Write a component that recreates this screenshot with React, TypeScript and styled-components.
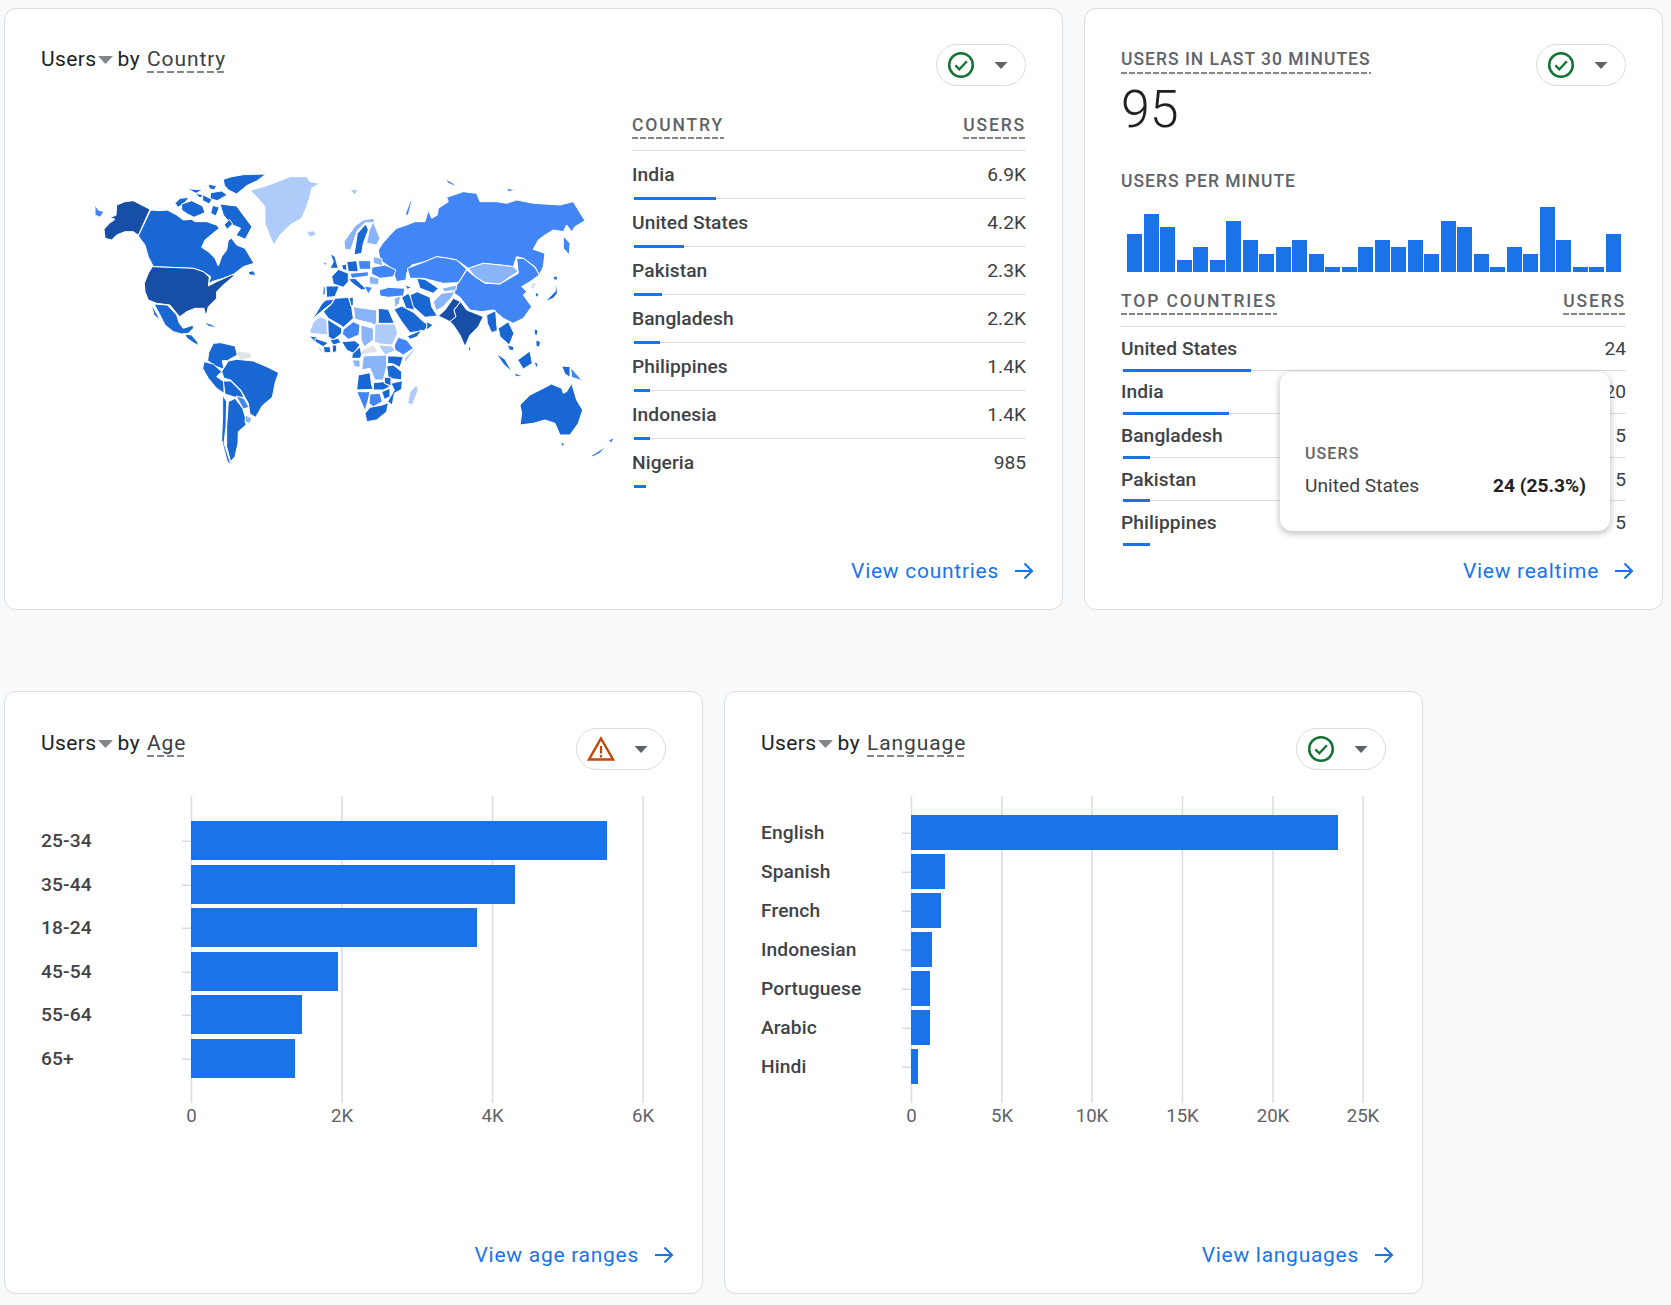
import React from 'react';
import styled, { createGlobalStyle } from 'styled-components';

const DARK = '#174ea6';
const MID = '#1967d2';
const BLUE = '#4285f4';
const SOFT = '#8ab4f8';
const PALE = '#aecbfa';
const GREY = '#e0e2e5';

const GlobalStyle = createGlobalStyle`
  html, body {
    margin: 0;
    background: #f8f9fa;
    font-family: Roboto, "Liberation Sans", sans-serif;
    color: #3c4043;
  }
`;

const Page = styled.div`
  display: flex;
  flex-direction: column;
  gap: 81px;
  padding: 8px 0 11px 4px;
  min-height: 1305px;
  box-sizing: border-box;
`;

const Row = styled.div`
  display: flex;
  gap: 21px;
`;

const Card = styled.section<{ $w: number; $low?: boolean }>`
  position: relative;
  display: flex;
  flex-direction: column;
  box-sizing: border-box;
  width: ${p => p.$w}px;
  height: ${p => (p.$low ? 603 : 602)}px;
  padding: ${p => (p.$low ? 36 : 35)}px 36px 0;
  background: #fff;
  border: 1px solid #dadce0;
  border-radius: 12px;
`;

const CardHeader = styled.div`
  display: flex;
  justify-content: space-between;
  align-items: flex-start;
`;

const Title = styled.div`
  display: flex;
  align-items: center;
  height: 30px;
  font-size: 21px;
  letter-spacing: 0.4px;
  color: #202124;
`;

const TitleCaret = styled.svg`
  width: 15px;
  height: 8px;
  margin: 2px 5px 0 1px;
`;

const Dashed = styled.span`
  margin-left: 7px;
  padding-bottom: 1px;
  line-height: 26px;
  letter-spacing: 0.9px;
  color: #3c4043;
  background: linear-gradient(to right, #80868b 70%, transparent 0) left bottom / 10px 2px repeat-x;
`;

const Pill = styled.div`
  display: flex;
  align-items: center;
  box-sizing: border-box;
  width: 90px;
  height: 42px;
  padding-left: 10px;
  gap: 19px;
  border: 1px solid #dadce0;
  border-radius: 21px;
`;

const Caption = styled.span<{ $tight?: boolean }>`
  display: inline-block;
  font-size: 17.5px;
  font-weight: 500;
  line-height: 24px;
  letter-spacing: ${p => (p.$tight ? '1px' : '1.85px')};
  color: #5f6368;
`;

const DashedCaption = styled(Caption)`
  background: linear-gradient(to right, #80868b 70%, transparent 0) left bottom / 8px 2px repeat-x;
  padding-bottom: 2px;
`;

const TableHead = styled.div`
  display: flex;
  justify-content: space-between;
  padding-bottom: 11px;
  border-bottom: 1px solid #dadce0;
`;

const TableLine = styled.div<{ $h: number }>`
  display: flex;
  justify-content: space-between;
  align-items: center;
  height: ${p => p.$h}px;
  font-size: 19.2px;
`;

const RowName = styled.span`
  font-weight: 500;
  letter-spacing: 0.08px;
  color: #3f4347;
`;

const RowValue = styled.span`
  color: #3c4043;
`;

const Track = styled.div<{ $last?: boolean }>`
  display: flex;
  height: 1px;
  background: ${p => (p.$last ? 'transparent' : '#dadce0')};
`;

const Fill = styled.div`
  height: 3px;
  margin: -1px 0 0 2px;
  background: #1a73e8;
`;

const Footer = styled.a`
  display: flex;
  justify-content: flex-end;
  align-items: center;
  gap: 15px;
  margin: auto -8px 0 0;
  padding-bottom: 26px;
  line-height: 24px;
  font-size: 21px;
  letter-spacing: 0.72px;
  color: #1a73e8;
`;

const CardBody = styled.div`
  display: flex;
  margin-top: 27px;
`;

const MapBox = styled.svg`
  flex: none;
  width: 591px;
  height: 380px;
`;

const CountryTable = styled.div`
  flex: 1;
`;

const Counter = styled.div`
  padding-top: 3px;
  ${DashedCaption} {
    padding-bottom: 3px;
  }
`;

const BigNumber = styled.div`
  margin-top: 8px;
  font-size: 52px;
  font-weight: 300;
  line-height: 56px;
  color: #202124;
`;

const PerMinute = styled.div`
  margin-top: 31px;
`;

const Spark = styled.div`
  display: flex;
  align-items: flex-end;
  justify-content: space-between;
  box-sizing: border-box;
  height: 65px;
  margin: 14px 0 17px;
  padding: 0 5px 0 6px;
`;

const SparkBar = styled.div`
  width: 15px;
  background: #1a73e8;
`;

const Tip = styled.div`
  position: absolute;
  left: 195px;
  top: 363px;
  box-sizing: border-box;
  width: 330px;
  height: 159px;
  padding: 70px 24px 0 25px;
  background: #fff;
  border-radius: 12px;
  box-shadow: 0 2px 6px 1px rgba(60, 64, 67, 0.3);
`;

const TipCaption = styled.div`
  font-size: 16px;
  font-weight: 500;
  line-height: 24px;
  letter-spacing: 1.1px;
  color: #5f6368;
`;

const TipRow = styled.div`
  display: flex;
  justify-content: space-between;
  margin-top: 8px;
  line-height: 24px;
  font-size: 19.2px;
  color: #3c4043;
`;

const TipStrong = styled.b`
  font-weight: 700;
  color: #202124;
`;

const ChartSvg = styled.svg`
  display: block;
  flex: none;
  width: 625px;
  height: 340px;
  margin-top: 26px;
`;

const ChartLabel = styled.text`
  font-size: 19.2px;
  font-weight: 500;
  letter-spacing: 0.1px;
  fill: #3f4347;
`;

const AxisLabel = styled.text`
  font-size: 18.6px;
  fill: #5f6368;
`;

const CheckIcon = () => (
  <svg width="28" height="28" viewBox="0 0 28 28">
    <circle cx="14" cy="14" r="11.8" fill="none" stroke="#137333" strokeWidth="2.5" />
    <path d="M8.4 14.4l3.9 3.9 7.6-8" fill="none" stroke="#137333" strokeWidth="2.3" />
  </svg>
);

const WarnIcon = () => (
  <svg width="28" height="28" viewBox="0 0 28 28">
    <path d="M14 3.5L26 24.5H2z" fill="none" stroke="#bf4a0a" strokeWidth="2.5" />
    <path d="M14 11v7.5M14 20v2.5" fill="none" stroke="#bf4a0a" strokeWidth="2.2" />
  </svg>
);

const Caret = () => (
  <svg width="14" height="7" viewBox="0 0 14 7">
    <path d="M0.5 0H13.5L7 7z" fill="#5f6368" />
  </svg>
);

const ArrowRight = () => (
  <svg width="20" height="20" viewBox="0 0 20 20">
    <path d="M1 10H18M10.5 2.5L18 10l-7.5 7.5" fill="none" stroke="#1a73e8" strokeWidth="2.1" />
  </svg>
);

type Shape = [string, string];

// traced at 3x, each group has its own origin on the page
const AMERICAS: Shape[] = [
  [BLUE, '45,135 55,150 72,155 60,172 45,165'],
  [DARK, '72,208 88,190 105,178 90,172 108,166 110,135 135,125 160,122 210,148 175,226 160,215 135,215 110,225 95,240 75,235'],
  [MID, '212,150 240,152 262,150 290,165 310,180 335,178 345,185 380,185 410,195 418,205 405,215 375,240 365,262 385,275 405,295 415,318 425,290 440,270 445,240 455,235 470,255 495,265 510,290 522,310 490,320 462,342 430,355 395,365 385,375 392,350 370,335 340,325 220,320 205,290 195,255 175,228'],
  [MID, '505,335 520,332 528,346 508,345'],
  [MID, '285,130 300,115 328,112 312,130 295,142'],
  [MID, '305,132 335,122 368,138 375,158 342,172 322,162 305,150'],
  [MID, '322,86 368,90 348,100'],
  [MID, '345,100 372,105 360,114'],
  [MID, '385,72 410,78 402,90 388,86'],
  [MID, '430,58 455,50 490,44 558,42 532,62 502,76 470,102 445,90 433,76'],
  [MID, '392,98 425,93 442,105 412,122 390,116'],
  [MID, '420,132 470,138 492,168 516,200 496,238 468,226 482,205 452,192 430,165'],
  [MID, '398,136 418,142 408,168 392,160'],
  [MID, '368,104 396,118 388,132 368,122'],
  [MID, '432,195 448,178 458,192 442,208'],
  [PALE, '510,92 550,80 580,70 630,50 680,50 690,65 720,70 695,85 690,110 680,140 665,175 630,195 600,225 582,255 570,230 555,190 555,140 530,110'],
  [DARK, '217,320 340,325 370,335 388,352 385,378 410,365 455,345 465,345 430,375 410,395 410,415 385,440 378,470 372,445 345,445 320,455 300,470 290,460 270,435 230,430 205,420 195,395 193,370 205,340'],
  [MID, '222,432 262,435 290,465 298,490 310,505 340,495 340,505 325,520 305,522 280,515 255,495 240,465'],
  [MID, '213,430 242,482 222,465'],
  [MID, '315,522 335,525 352,545 356,557 340,548 320,534'],
  [BLUE, '372,486 395,493 412,505 385,499'],
  [MID, '400,550 422,548 465,558 472,585 442,602 427,602 432,628 405,618 383,602 386,578'],
  [GREY, '470,573 512,578 517,592 480,602'],
  [MID, '372,605 400,612 425,635 410,650 432,665 432,700 410,685 385,655 368,625'],
  [MID, '425,635 445,603 470,598 520,603 560,620 596,638 586,667 577,712 547,737 527,772 510,762 505,730 482,690 452,660 432,655'],
  [MID, '430,663 452,663 482,693 492,712 465,712 435,702'],
  [BLUE, '468,708 492,715 507,742 490,747'],
  [MID, '428,705 440,725 438,800 432,850 450,905 462,918 442,905 425,840 428,770'],
  [MID, '445,725 465,715 488,745 497,775 498,795 475,815 474,850 465,890 452,905 440,860 440,800'],
  [SOFT, '497,765 515,775 510,790 495,787'],
];

const ASIA: Shape[] = [
  [PALE, '20,215 40,212 50,222 30,232'],
  [PALE, '150,90 175,88 165,105'],
  [BLUE, '248,250 270,225 290,205 320,195 345,185 375,185 385,150 395,175 412,165 415,145 445,125 440,112 490,95 530,100 540,125 590,125 620,130 650,120 700,130 780,135 820,125 835,150 855,182 825,200 815,215 800,195 790,215 760,210 735,225 715,240 700,268 735,280 730,320 718,345 705,320 670,295 650,290 640,320 600,315 550,310 505,325 470,300 445,295 410,290 375,305 335,315 320,340 318,360 290,365 275,325 240,300 235,270'],
  [BLUE, '790,228 810,250 808,285 790,265'],
  [BLUE, '315,165 330,125 358,110 335,125 325,165'],
  [BLUE, '435,55 460,70 470,80 445,70'],
  [BLUE, '620,85 650,90 625,95'],
  [BLUE, '322,325 375,305 410,290 445,295 470,300 500,328 475,368 430,370 370,355 330,355'],
  [BLUE, '500,330 525,350 555,370 600,372 655,340 650,295 670,295 705,322 718,345 690,365 665,380 680,395 670,405 695,440 670,475 640,490 610,475 580,450 545,455 510,450 480,412 452,392 475,370'],
  [SOFT, '505,325 550,310 600,315 640,320 655,335 630,350 600,372 555,368 525,350'],
  [MID, '560,465 587,452 592,512 575,518 562,490'],
  [MID, '595,505 625,485 642,520 628,555 600,530'],
  [MID, '622,555 642,560 640,572 628,570'],
  [MID, '588,580 615,598 637,637 610,612'],
  [MID, '653,600 690,573 697,610 670,627'],
  [MID, '640,640 670,646 650,650'],
  [MID, '785,618 810,620 810,652 795,642'],
  [BLUE, '812,622 847,662 815,652'],
  [MID, '702,508 714,510 712,526 704,524'],
  [MID, '708,540 722,545 718,562 708,558'],
  [MID, '702,606 714,610 710,626'],
  [MID, '735,425 765,395 770,370 772,400 760,415'],
  [MID, '760,350 772,348 772,360 762,360'],
  [MID, '705,395 718,405 708,412'],
  [GREY, '695,370 710,366 702,388 692,385'],
  [MID, '505,560 512,562 512,572 506,572'],
  [MID, '660,735 690,705 720,690 755,672 785,685 790,700 800,695 815,670 830,720 848,750 835,790 810,825 780,825 765,790 735,780 700,790 660,795 665,760'],
  [MID, '782,848 795,850 787,860'],
  [BLUE, '872,888 920,858 900,880 880,890'],
  [BLUE, '925,840 942,833 935,850'],
  [MID, '90,280 105,290 115,325 90,325 100,305'],
  [MID, '70,305 80,310 75,318'],
  [BLUE, '70,380 76,380 76,405 68,405'],
  [MID, '78,378 118,378 105,410 80,412'],
];

const EUROPE_MIDEAST: Shape[] = [
  [SOFT, '42,95 75,48 100,30 130,25 135,38 105,38 82,62 62,120 45,118'],
  [MID, '72,135 82,70 108,42 115,60 100,100 95,130'],
  [SOFT, '110,100 118,60 130,35 150,85 140,105'],
  [MID, '5,200 25,178 55,190 55,215 40,232 10,222'],
  [MID, '35,165 50,162 50,182 38,178'],
  [MID, '50,155 80,152 85,185 55,185'],
  [BLUE, '85,152 122,152 122,178 88,178'],
  [SOFT, '130,140 155,145 158,168 130,160'],
  [BLUE, '125,172 165,165 198,180 190,200 150,205 125,192'],
  [BLUE, '60,190 115,185 115,198 65,205'],
  [MID, '55,207 75,205 110,238 95,240 70,222'],
  [SOFT, '118,198 148,205 145,225 118,222'],
  [BLUE, '102,228 128,232 115,252'],
  [BLUE, '148,240 175,232 225,235 220,258 175,262 150,258'],
  [MID, '225,225 245,232 232,238'],
  [MID, '215,262 235,250 252,278 252,300 228,295'],
  [MID, '240,255 262,245 300,262 305,290 322,318 285,322 250,290'],
  [SOFT, '192,265 212,258 208,280 195,292'],
  [MID, '192,298 215,288 252,308 280,335 298,345 282,362 240,368 215,335'],
  [MID, '232,378 275,360 262,380 240,388'],
  [MID, '290,335 310,345 290,360'],
  [MID, '260,205 285,208 325,235 310,250 270,235'],
  [SOFT, '335,235 380,225 378,240 345,245'],
  [SOFT, '310,275 335,250 375,245 365,262 340,290 318,302'],
  [DARK, '325,318 345,300 370,265 392,275 372,300 378,320 360,335 340,325'],
  [DARK, '360,335 378,320 372,300 392,275 410,300 460,320 445,350 420,375 405,410 390,375 370,345'],
];

const AFRICA: Shape[] = [
  [MID, '22,88 50,42 62,30 88,28 78,42 52,62'],
  [MID, '55,65 80,42 90,25 130,22 140,50 145,85 115,112 105,105 70,85'],
  [MID, '132,22 145,22 145,45 138,48'],
  [SOFT, '145,50 175,55 215,60 215,110 200,100 150,88'],
  [MID, '220,55 250,58 268,100 220,100'],
  [PALE, '15,122 25,95 45,80 65,88 68,135 15,130'],
  [MID, '68,88 110,115 110,130 85,150 70,140'],
  [BLUE, '115,118 145,95 165,105 162,135 130,148 112,132'],
  [SOFT, '168,105 205,115 205,150 178,170 168,150'],
  [PALE, '210,102 270,102 278,130 262,165 225,162 208,155'],
  [BLUE, '268,165 280,142 305,150 325,175 295,195 270,180'],
  [PALE, '340,162 325,185 300,218 298,205 325,178'],
  [PALE, '220,165 262,168 270,182 240,195'],
  [GREY, '168,182 205,165 220,185 185,192 170,195'],
  [MID, '110,155 150,152 165,165 145,190 125,180'],
  [MID, '12,138 32,140 50,155 30,155'],
  [MID, '75,150 100,145 108,158 85,165'],
  [MID, '30,145 70,158 55,170 30,155'],
  [MID, '55,170 75,170 78,188 58,188'],
  [MID, '82,165 95,165 95,185 82,188'],
  [PALE, '35,165 50,178 48,188'],
  [MID, '142,192 165,170 170,195 165,205 140,205'],
  [SOFT, '142,210 165,210 165,232 148,230'],
  [SOFT, '175,198 245,195 245,230 235,270 210,270 195,235 170,240'],
  [MID, '248,198 268,198 295,200 285,232 265,222 248,220'],
  [MID, '245,228 265,225 290,245 290,270 250,265'],
  [MID, '160,255 195,248 200,285 205,298 155,300'],
  [MID, '205,278 235,275 255,290 235,300 205,300'],
  [MID, '238,262 258,262 258,288 238,280'],
  [MID, '258,280 292,272 290,298 268,310 262,345 248,335 268,300'],
  [BLUE, '155,305 195,305 190,330 180,362 168,335'],
  [BLUE, '195,312 225,310 232,335 205,350 192,340'],
  [MID, '230,305 255,295 255,320 238,328'],
  [MID, '180,370 195,352 232,345 250,338 245,365 215,390 185,395'],
  [PALE, '335,285 340,300 322,345 308,340 315,305'],
];

const MapGroup: React.FC<{ x: number; y: number; shapes: Shape[] }> = ({ x, y, shapes }) => (
  <g transform={`translate(${x} ${y}) scale(0.3333)`} stroke="#fff" strokeWidth="3" strokeLinejoin="round">
    {shapes.map(([fill, points]) => (
      <polygon key={points} fill={fill} points={points} />
    ))}
  </g>
);

const WorldMap = () => (
  <MapBox viewBox="41 113 591 380">
    <MapGroup x={80} y={160} shapes={AMERICAS} />
    <MapGroup x={300} y={160} shapes={ASIA} />
    <MapGroup x={330} y={210} shapes={EUROPE_MIDEAST} />
    <MapGroup x={305} y={290} shapes={AFRICA} />
  </MapBox>
);

interface ICardTitleProps {
  by: string;
}

const CardTitle: React.FC<ICardTitleProps> = ({ by }) => (
  <Title>
    Users
    <TitleCaret viewBox="0 0 15 8">
      <path d="M0 0H15L7.5 8z" fill="#80868b" />
    </TitleCaret>
    by
    <Dashed>{by}</Dashed>
  </Title>
);

const Status: React.FC<{ warn?: boolean }> = ({ warn }) => (
  <Pill>
    {warn ? <WarnIcon /> : <CheckIcon />}
    <Caret />
  </Pill>
);

const ViewLink: React.FC<{ label: string }> = ({ label }) => (
  <Footer>
    {label}
    <ArrowRight />
  </Footer>
);

interface ITableRow {
  name: string;
  value: string;
  bar: number;
}

const COUNTRIES: ITableRow[] = [
  { name: 'India', value: '6.9K', bar: 82 },
  { name: 'United States', value: '4.2K', bar: 50 },
  { name: 'Pakistan', value: '2.3K', bar: 28 },
  { name: 'Bangladesh', value: '2.2K', bar: 26 },
  { name: 'Philippines', value: '1.4K', bar: 16 },
  { name: 'Indonesia', value: '1.4K', bar: 16 },
  { name: 'Nigeria', value: '985', bar: 12 },
];

const TOP_COUNTRIES: ITableRow[] = [
  { name: 'United States', value: '24', bar: 128 },
  { name: 'India', value: '20', bar: 106 },
  { name: 'Bangladesh', value: '5', bar: 27 },
  { name: 'Pakistan', value: '5', bar: 27 },
  { name: 'Philippines', value: '5', bar: 27 },
];

const TableRows: React.FC<{ rows: ITableRow[]; lineHeight: number }> = ({ rows, lineHeight }) => (
  <>
    {rows.map((row, i) => (
      <div key={row.name}>
        <TableLine $h={lineHeight}>
          <RowName>{row.name}</RowName>
          <RowValue>{row.value}</RowValue>
        </TableLine>
        <Track $last={i === rows.length - 1}>
          <Fill style={{ width: row.bar }} />
        </Track>
      </div>
    ))}
  </>
);

const PER_MINUTE = [38, 58, 45, 12, 25, 12, 51, 32, 18, 25, 32, 18, 5, 5, 25, 32, 25, 32, 18, 51, 45, 18, 5, 25, 18, 65, 32, 5, 5, 38];

interface IBar {
  label: string;
  y: number;
  h: number;
  right: number;
}

interface IBarChartProps {
  originX: number;
  ticks: [number, string][];
  bars: IBar[];
}

// page coordinates go in, the svg starts at content left / y 796
const BarChart: React.FC<IBarChartProps> = ({ originX, ticks, bars }) => {
  const left = ticks[0][0];
  return (
    <ChartSvg viewBox={`${originX} 796 625 340`}>
      {ticks.map(([x, label]) => (
        <React.Fragment key={label}>
          <rect x={x - 0.75} y={796} width={1.5} height={307} fill="#dadce0" />
          <AxisLabel x={x} y={1116} textAnchor="middle" dominantBaseline="central">
            {label}
          </AxisLabel>
        </React.Fragment>
      ))}
      {bars.map(bar => (
        <React.Fragment key={bar.label}>
          <rect x={left - 9.5} y={bar.y + bar.h / 2} width={9} height={1.5} fill="#dadce0" />
          <rect x={left - 0.5} y={bar.y} width={bar.right - left + 0.5} height={bar.h} fill="#1a73e8" />
          <ChartLabel x={originX} y={bar.y + bar.h / 2} dominantBaseline="central">
            {bar.label}
          </ChartLabel>
        </React.Fragment>
      ))}
    </ChartSvg>
  );
};

const AGE_BARS: IBar[] = [
  { label: '25-34', y: 821, h: 39, right: 607 },
  { label: '35-44', y: 865, h: 39, right: 515 },
  { label: '18-24', y: 908, h: 39, right: 477 },
  { label: '45-54', y: 952, h: 39, right: 338 },
  { label: '55-64', y: 995, h: 39, right: 302 },
  { label: '65+', y: 1039, h: 39, right: 295 },
];

const LANGUAGE_BARS: IBar[] = [
  { label: 'English', y: 815, h: 35, right: 1338 },
  { label: 'Spanish', y: 854, h: 35, right: 945 },
  { label: 'French', y: 893, h: 35, right: 941 },
  { label: 'Indonesian', y: 932, h: 35, right: 932 },
  { label: 'Portuguese', y: 971, h: 35, right: 930 },
  { label: 'Arabic', y: 1010, h: 35, right: 930 },
  { label: 'Hindi', y: 1049, h: 35, right: 918 },
];

const App: React.FC = () => {
  return (
    <Page>
      <GlobalStyle />
      <Row>
        <Card $w={1059}>
          <CardHeader>
            <CardTitle by="Country" />
            <Status />
          </CardHeader>
          <CardBody>
            <WorldMap />
            <CountryTable>
              <TableHead>
                <DashedCaption>COUNTRY</DashedCaption>
                <DashedCaption>USERS</DashedCaption>
              </TableHead>
              <TableRows rows={COUNTRIES} lineHeight={47} />
            </CountryTable>
          </CardBody>
          <ViewLink label="View countries" />
        </Card>
        <Card $w={579}>
          <CardHeader>
            <Counter>
              <DashedCaption $tight>USERS IN LAST 30 MINUTES</DashedCaption>
              <BigNumber>95</BigNumber>
            </Counter>
            <Status />
          </CardHeader>
          <PerMinute>
            <Caption $tight>USERS PER MINUTE</Caption>
          </PerMinute>
          <Spark>
            {PER_MINUTE.map((h, i) => (
              <SparkBar key={i} style={{ height: h }} />
            ))}
          </Spark>
          <TableHead>
            <DashedCaption>TOP COUNTRIES</DashedCaption>
            <DashedCaption>USERS</DashedCaption>
          </TableHead>
          <TableRows rows={TOP_COUNTRIES} lineHeight={42.6} />
          <ViewLink label="View realtime" />
          <Tip>
            <TipCaption>USERS</TipCaption>
            <TipRow>
              <span>United States</span>
              <TipStrong>24 (25.3%)</TipStrong>
            </TipRow>
          </Tip>
        </Card>
      </Row>
      <Row>
        <Card $w={699} $low>
          <CardHeader>
            <CardTitle by="Age" />
            <Status warn />
          </CardHeader>
          <BarChart
            originX={41}
            ticks={[
              [191.5, '0'],
              [342, '2K'],
              [492.6, '4K'],
              [643, '6K'],
            ]}
            bars={AGE_BARS}
          />
          <ViewLink label="View age ranges" />
        </Card>
        <Card $w={699} $low>
          <CardHeader>
            <CardTitle by="Language" />
            <Status />
          </CardHeader>
          <BarChart
            originX={761}
            ticks={[
              [911.5, '0'],
              [1002, '5K'],
              [1092, '10K'],
              [1182.5, '15K'],
              [1273, '20K'],
              [1363, '25K'],
            ]}
            bars={LANGUAGE_BARS}
          />
          <ViewLink label="View languages" />
        </Card>
      </Row>
    </Page>
  );
};

export default App;
